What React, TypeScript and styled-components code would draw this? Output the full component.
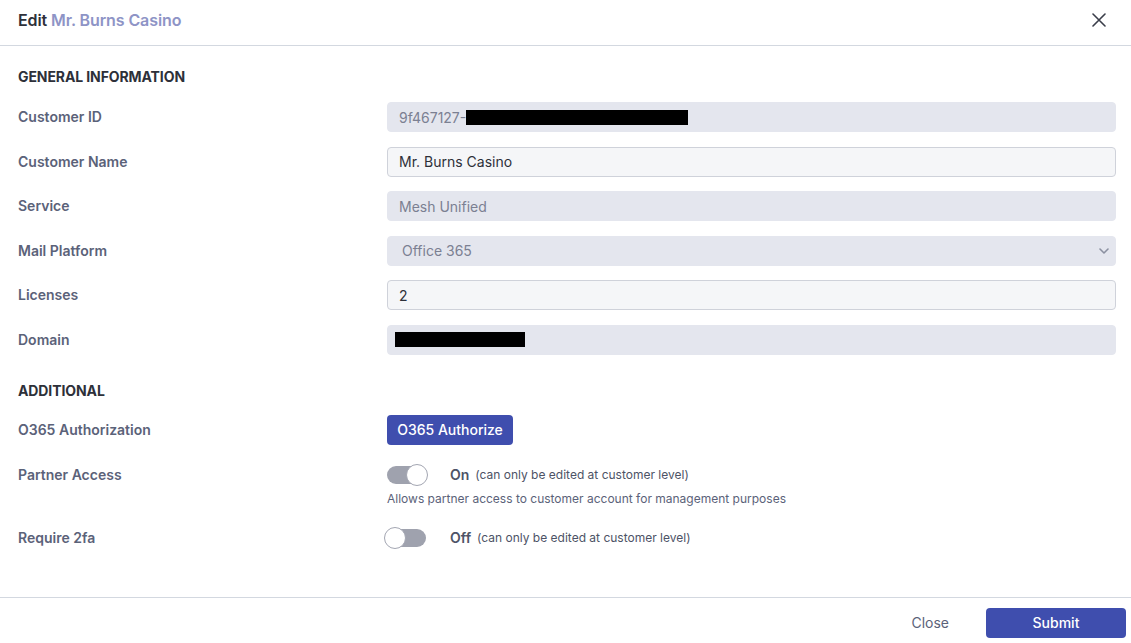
import React from "react";
import styled, { createGlobalStyle } from "styled-components";

const Global = createGlobalStyle`
  html, body { margin: 0; padding: 0; background: #fff; }
  body { font-family: Inter, "Noto Sans", sans-serif; -webkit-font-smoothing: antialiased; }
  * { box-sizing: border-box; }
`;

const Modal = styled.div`
  width: 1131px;
  height: 643px;
  display: flex;
  flex-direction: column;
  background: #fff;
`;

const Header = styled.header`
  height: 46px;
  flex: none;
  display: flex;
  align-items: center;
  justify-content: space-between;
  padding: 0 24px 5px 18px;
  border-bottom: 1px solid #d3d8e0;
`;

const Title = styled.h1`
  margin: 0;
  font-size: 16px;
  font-weight: 600;
  color: #2d3039;
  letter-spacing: -0.1px;
`;

const TitleName = styled.span`
  color: #8e94c6;
`;

const CloseX = styled.button`
  border: 0;
  background: none;
  padding: 0;
  width: 16px;
  height: 16px;
  display: flex;
  align-items: center;
  justify-content: center;
  color: #3a3e4a;
  cursor: pointer;
`;

const Body = styled.main`
  flex: 1;
  padding: 21px 15px 0 18px;
  display: flex;
  flex-direction: column;
`;

const SectionTitle = styled.h2<{ $gap: number }>`
  margin: 0 0 ${(p) => p.$gap}px;
  height: 20px;
  line-height: 20px;
  font-size: 14px;
  font-weight: 700;
  color: #2d3039;
  text-transform: uppercase;
  letter-spacing: -0.1px;
`;

const Rows = styled.div<{ $gap: number; $after?: number }>`
  display: flex;
  flex-direction: column;
  gap: ${(p) => p.$gap}px;
  margin-bottom: ${(p) => p.$after ?? 0}px;
`;

const Row = styled.div<{ $align?: string; $mt?: number }>`
  display: grid;
  grid-template-columns: 369px 1fr;
  align-items: ${(p) => p.$align ?? "center"};
  margin-top: ${(p) => p.$mt ?? 0}px;
`;

const Label = styled.label<{ $mt?: number }>`
  font-size: 14px;
  font-weight: 600;
  color: #5b6279;
  line-height: 20px;
  margin-top: ${(p) => p.$mt ?? 0}px;
`;

const Field = styled.div<{ $disabled?: boolean; $pl?: number }>`
  position: relative;
  height: 30px;
  border-radius: 4px;
  display: flex;
  align-items: center;
  padding: 0 11px 0 ${(p) => p.$pl ?? 11}px;
  font-size: 14px;
  background: ${(p) => (p.$disabled ? "#e4e6ee" : "#f5f6f8")};
  border: 1px solid ${(p) => (p.$disabled ? "#e4e6ee" : "#cfd2da")};
  color: ${(p) => (p.$disabled ? "#7b8092" : "#2d3039")};
`;

const SelectField = styled(Field)`
  padding: 0 14px;
  justify-content: space-between;
`;

const Redacted = styled.span<{ $w: number }>`
  display: inline-block;
  width: ${(p) => p.$w}px;
  height: 15px;
  background: #000;
`;

const Chevron = styled.svg`
  color: #8b90a0;
  margin-right: -8px;
`;

const PrimaryButton = styled.button<{ $w: number }>`
  width: ${(p) => p.$w}px;
  height: 30px;
  border: 0;
  border-radius: 4px;
  background: #3f4eae;
  color: #fff;
  font-family: inherit;
  font-size: 14px;
  font-weight: 500;
  cursor: pointer;
`;

const ToggleCell = styled.div`
  display: flex;
  flex-direction: column;
  gap: 5px;
`;

const ToggleLine = styled.div`
  display: flex;
  align-items: center;
  height: 22px;
`;

const Track = styled.div<{ $on: boolean }>`
  position: relative;
  width: 40px;
  height: 18px;
  border-radius: 9px;
  background: #9fa2ae;
  margin-left: ${(p) => (p.$on ? 0 : -1)}px;
  flex: none;
`;

const Knob = styled.span<{ $on: boolean }>`
  position: absolute;
  top: -2px;
  ${(p) => (p.$on ? "right: -1px;" : "left: -2px;")}
  width: 22px;
  height: 22px;
  border-radius: 50%;
  background: #fff;
  border: 1.5px solid #a3a6b2;
`;

const State = styled.span<{ $ml: number }>`
  margin-left: ${(p) => p.$ml}px;
  font-size: 14px;
  font-weight: 600;
  color: #4d5366;
`;

const Note = styled.span`
  margin-left: 6px;
  font-size: 12px;
  color: #4d5366;
`;

const Help = styled.div`
  font-size: 12px;
  color: #5b6279;
`;

const Footer = styled.footer`
  height: 46px;
  flex: none;
  border-top: 1px solid #d3d8e0;
  display: flex;
  align-items: center;
  justify-content: flex-end;
  gap: 37px;
  padding: 4px 5px 0 0;
`;

const TextButton = styled.button`
  border: 0;
  background: none;
  font-family: inherit;
  font-size: 14px;
  color: #5b6279;
  cursor: pointer;
  padding: 0;
`;

const Toggle = ({ on }: { on: boolean }) => (
  <Track $on={on}>
    <Knob $on={on} />
  </Track>
);

export default function App() {
  return (
    <>
      <Global />
      <Modal>
        <Header>
          <Title>
            Edit <TitleName>Mr. Burns Casino</TitleName>
          </Title>
          <CloseX aria-label="Close">
            <svg width="14" height="14" viewBox="0 0 14 14" fill="none">
              <path d="M1 1L13 13M13 1L1 13" stroke="currentColor" strokeWidth="1.6" strokeLinecap="round" />
            </svg>
          </CloseX>
        </Header>
        <Body>
          <SectionTitle $gap={15}>General Information</SectionTitle>
          <Rows $gap={14.5} $after={26}>
            <Row>
              <Label>Customer ID</Label>
              <Field $disabled>
                9f467127-
                <Redacted $w={222} />
              </Field>
            </Row>
            <Row>
              <Label>Customer Name</Label>
              <Field>Mr. Burns Casino</Field>
            </Row>
            <Row>
              <Label>Service</Label>
              <Field $disabled>Mesh Unified</Field>
            </Row>
            <Row>
              <Label>Mail Platform</Label>
              <SelectField $disabled>
                Office 365
                <Chevron width="10" height="6" viewBox="0 0 10 6" fill="none">
                  <path d="M1 1l4 4 4-4" stroke="currentColor" strokeWidth="1.6" strokeLinecap="round" strokeLinejoin="round" />
                </Chevron>
              </SelectField>
            </Row>
            <Row>
              <Label>Licenses</Label>
              <Field>2</Field>
            </Row>
            <Row>
              <Label>Domain</Label>
              <Field $disabled $pl={7}>
                <Redacted $w={130} />
              </Field>
            </Row>
          </Rows>
          <SectionTitle $gap={14}>Additional</SectionTitle>
          <Rows $gap={19}>
            <Row>
              <Label>O365 Authorization</Label>
              <div>
                <PrimaryButton $w={126}>O365 Authorize</PrimaryButton>
              </div>
            </Row>
            <Row $align="start">
              <Label $mt={1}>Partner Access</Label>
              <ToggleCell>
                <ToggleLine>
                  <Toggle on />
                  <State $ml={23}>On</State>
                  <Note>(can only be edited at customer level)</Note>
                </ToggleLine>
                <Help>Allows partner access to customer account for management purposes</Help>
              </ToggleCell>
            </Row>
            <Row $mt={2}>
              <Label>Require 2fa</Label>
              <ToggleLine>
                <Toggle on={false} />
                <State $ml={24}>Off</State>
                <Note>(can only be edited at customer level)</Note>
              </ToggleLine>
            </Row>
          </Rows>
        </Body>
        <Footer>
          <TextButton>Close</TextButton>
          <PrimaryButton $w={140}>Submit</PrimaryButton>
        </Footer>
      </Modal>
    </>
  );
}
